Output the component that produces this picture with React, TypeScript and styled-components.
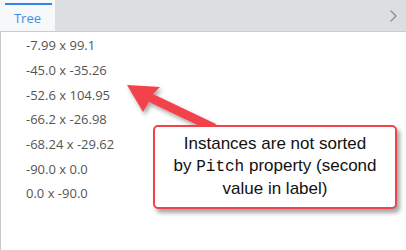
import React from 'react'
import styled, { createGlobalStyle } from 'styled-components'

const values = [
  '-7.99 x 99.1',
  '-45.0 x -35.26',
  '-52.6 x 104.95',
  '-66.2 x -26.98',
  '-68.24 x -29.62',
  '-90.0 x 0.0',
  '0.0 x -90.0',
]

const App = () => {
  return (
    <Page>
      <GlobalStyle />
      <TabBar>
        <Tab>Tree</Tab>
        <Chevron>
          <svg width="9" height="14" viewBox="0 0 9 14">
            <path d="M1.5 1.5 L7 7 L1.5 12.5" fill="none" stroke="#8a8d90" strokeWidth="1.3" />
          </svg>
        </Chevron>
      </TabBar>

      <TreeList>
        {values.map((v) => (
          <TreeItem key={v}>{v}</TreeItem>
        ))}
      </TreeList>

      <Arrow width="406" height="250" viewBox="0 0 406 250">
        <defs>
          <filter id="sh" x="-20%" y="-20%" width="140%" height="140%">
            <feDropShadow dx="2" dy="3" stdDeviation="2" floodColor="#000" floodOpacity="0.35" />
          </filter>
        </defs>
        <path
          d="M127 85 L160 87 L153 94 L216 124 L212 132 L149 102 L143 112 Z"
          fill="#f2434b"
          filter="url(#sh)"
        />
      </Arrow>

      <Callout>
        Instances are not sorted
        <br />
        by <Code>Pitch</Code> property (second
        <br />
        value in label)
      </Callout>
    </Page>
  )
}

export default App

const GlobalStyle = createGlobalStyle`
  body {
    margin: 0;
    background: #fff;
  }
`

const Page = styled.div`
  width: 406px;
  height: 250px;
  position: relative;
  overflow: hidden;
  background: #fff;
  display: flex;
  flex-direction: column;
`

const TabBar = styled.div`
  height: 31px;
  background: #dcdfe1;
  border-bottom: 1px solid #c9cdd0;
  display: flex;
  justify-content: space-between;
  align-items: stretch;
`

const Tab = styled.div`
  width: 55px;
  background: #f6f8fa;
  position: relative;
  display: flex;
  align-items: center;
  justify-content: center;
  padding-top: 4px;
  box-sizing: border-box;
  font-family: "Open Sans", sans-serif;
  font-size: 13px;
  color: #3f8de6;

  &::before {
    content: "";
    position: absolute;
    left: 5px;
    right: 3px;
    top: 3px;
    height: 2px;
    background: #2f86e4;
  }
`

const Chevron = styled.div`
  width: 26px;
  display: flex;
  align-items: center;
  justify-content: center;
`

const TreeList = styled.ul`
  flex: 1;
  margin: 0;
  list-style: none;
  padding: 1px 0 0 25px;
  border-left: 1px solid #c6cacd;
`

const TreeItem = styled.li`
  height: 24.7px;
  display: flex;
  align-items: center;
  font-family: "Open Sans", sans-serif;
  font-size: 13px;
  color: #555;
`

const Arrow = styled.svg`
  position: absolute;
  left: 0;
  top: 0;
  pointer-events: none;
`

const Callout = styled.div`
  position: absolute;
  left: 153px;
  top: 125px;
  width: 244px;
  height: 84px;
  box-sizing: border-box;
  padding-top: 6px;
  border: 2px solid #f2434b;
  border-radius: 5px;
  background: #fff;
  box-shadow: 3px 4px 4px rgba(0, 0, 0, 0.35);
  text-align: center;
  white-space: nowrap;
  font-family: "Liberation Sans", Arial, sans-serif;
  font-size: 17px;
  line-height: 22px;
  color: #111;
`

const Code = styled.span`
  font-family: "Liberation Mono", "Courier New", monospace;
  font-size: 16px;
`
